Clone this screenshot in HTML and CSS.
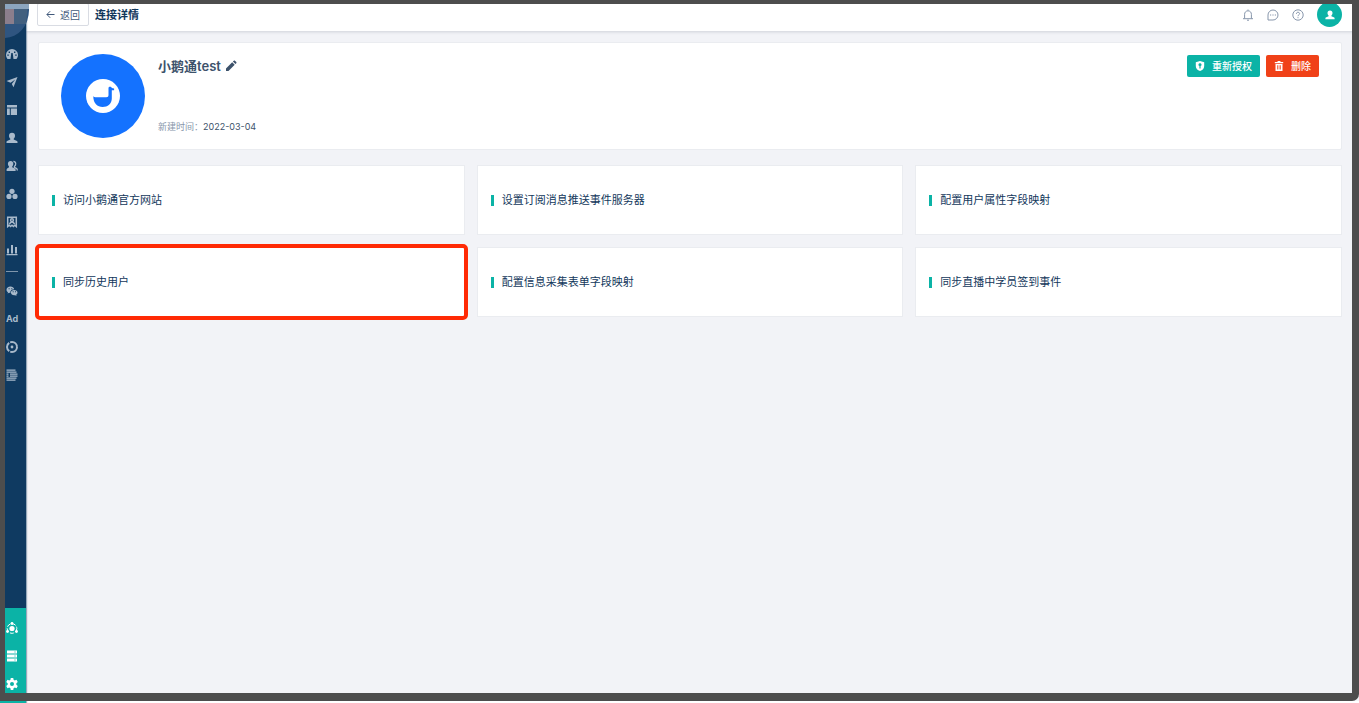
FILE: index.html
```html
<!DOCTYPE html>
<html lang="zh-CN">
<head>
  <meta charset="UTF-8">
  <meta name="viewport" content="width=device-width, initial-scale=1.0">
  <title>连接详情</title>
  <link rel="stylesheet" href="styles.css">
</head>
<body>
  <div class="layout">
    <nav class="sidebar" aria-label="主导航">
      <svg class="logo" viewBox="0 0 29 38" aria-hidden="true">
        <path d="M0 0h29v10a24 28 0 0 1-24 28H0z" fill="#2f5580"/>
        <path d="M0 0h29v9H0z" fill="#8ca5bf"/>
        <path d="M0 9h14v15H0z" fill="#8b7e8c"/>
        <path d="M14 9h13.500l-1.500 15H14z" fill="#42607f"/>
      </svg>
      <div class="menu">
        <a href="#" class="menu-item" aria-label="仪表盘">
          <svg class="icon" viewBox="0 0 12 12"><path fill="currentColor" fill-rule="evenodd" d="M1.500 11A6 6 0 1 1 10.500 11H7.500L6.700 5H5.300L4.500 11zM1.300 6.500h1.500v1.300H1.300zM2.600 3.500h1.400v1.400H2.600zM8 3.500h1.400v1.400H8zM9.200 6.500h1.500v1.300H9.200z"/></svg>
        </a>
        <a href="#" class="menu-item" aria-label="发送">
          <svg class="icon" viewBox="0 0 12 12"><path fill="currentColor" d="M.5 5 11.500 1 7.500 11.200 5.800 8 9.200 3.600 4.600 6.700z"/></svg>
        </a>
        <a href="#" class="menu-item" aria-label="页面">
          <svg class="icon" viewBox="0 0 12 12"><path fill="currentColor" d="M1 1h10v2.500H1zM1 4.500h2.800V11H1zM4.800 4.500H11V11H4.800z"/></svg>
        </a>
        <a href="#" class="menu-item" aria-label="用户">
          <svg class="icon" viewBox="0 0 12 12"><path fill="currentColor" d="M6 .7c2 0 3 1.300 3 3 0 1.400-.6 2.300-1.300 3v.9l3.300 1.300c.4.200.5.500.5 1V11H.5v-1.100c0-.5.1-.8.5-1l3.300-1.300v-.9C3.600 6 3 5.100 3 3.700c0-1.700 1-3 3-3z"/></svg>
        </a>
        <a href="#" class="menu-item" aria-label="群组">
          <svg class="icon" viewBox="0 0 12 12"><path fill="currentColor" d="M4.600 1c1.700 0 2.700 1.200 2.700 2.800 0 1.300-.5 2-1.100 2.700v.8L9 8.500c.4.200.6.500.6 1V11H.6V9.500c0-.5.2-.8.6-1L3 7.300v-.8c-.6-.7-1.100-1.400-1.100-2.700C1.900 2.200 2.900 1 4.600 1z"/><path fill="none" stroke="currentColor" stroke-width="1.300" d="M7.400 1.500c3 0 2.800 3.500 1 5v.8l2.300 1.300c.4.300.6.800.6 1.800"/></svg>
        </a>
        <a href="#" class="menu-item" aria-label="分群">
          <svg class="icon" viewBox="0 0 12 12" fill="currentColor"><circle cx="6" cy="3.300" r="2.600"/><circle cx="3" cy="8.400" r="2.600"/><circle cx="9" cy="8.400" r="2.600"/></svg>
        </a>
        <a href="#" class="menu-item" aria-label="会员">
          <svg class="icon" viewBox="0 0 12 12" fill="none" stroke="currentColor" stroke-width="1.500"><path d="M1.700 1.200h8.600v9.400L8.800 9.300 7.400 10.600 6 9.300l-1.400 1.300-1.400-1.300-1.500 1.300z"/><circle cx="6" cy="4.200" r="1.400"/><path d="M3.500 8.200C4 6.300 5 5.900 6 5.900s2 .4 2.500 2.300"/></svg>
        </a>
        <a href="#" class="menu-item" aria-label="统计">
          <svg class="icon" viewBox="0 0 12 12"><path fill="currentColor" d="M1 4.500h2v5H1zM5 1h2v8.500H5zM9 3h2v6.500H9zM.5 10h11v1.300H.5z"/></svg>
        </a>
        <hr class="menu-divider">
        <a href="#" class="menu-item" aria-label="微信">
          <svg class="icon" viewBox="0 0 12 12"><path fill="currentColor" d="M4.500 1.500C2.200 1.500.5 2.900.5 4.700c0 1.100.6 2 1.500 2.600l-.4 1.300 1.500-.8 1.200.1C4 5.700 5.700 4.200 8.200 4.200 7.800 2.600 6.300 1.500 4.500 1.500z"/><path fill="currentColor" d="M8.200 4.900c-1.900 0-3.300 1.100-3.300 2.700 0 1.500 1.400 2.700 3.300 2.700l1-.1 1.300.7-.3-1.100c.8-.5 1.300-1.300 1.300-2.200 0-1.600-1.500-2.700-3.300-2.700z"/><path fill="#0f3a61" d="M2.600 3.300h1v1h-1zM5.300 3.300h1v1h-1zM6.700 6.300h.9v.9h-.9zM9 6.300h.9v.9H9z"/></svg>
        </a>
        <a href="#" class="menu-item menu-text">Ad</a>
        <a href="#" class="menu-item" aria-label="目标">
          <svg class="icon" viewBox="0 0 12 12"><circle cx="6" cy="6" r="5" fill="none" stroke="currentColor" stroke-width="2" stroke-dasharray="9.500 1"/><circle cx="6" cy="6" r="1.400" fill="currentColor"/></svg>
        </a>
        <a href="#" class="menu-item" aria-label="日志">
          <svg class="icon" viewBox="0 0 12 12"><path fill="none" stroke="currentColor" stroke-width="1.200" d="M.5 1.200h9M.5 3.200h10M.5 5.200h2M4 5.200h7.500M.5 7.200h2M4 7.200h7.500M.5 9.200h10M.5 11.200h9"/></svg>
        </a>
      </div>
      <div class="menu-bottom">
        <a href="#" class="menu-item" aria-label="连接">
          <svg class="icon" viewBox="0 0 12 12"><circle cx="6" cy="6.500" r="4.800" fill="none" stroke="currentColor" stroke-dasharray="4 1.500"/><g fill="currentColor"><circle cx="6" cy="6.500" r="2.600"/><circle cx="6" cy="1.500" r="1.400"/><circle cx="1.500" cy="9.500" r="1.400"/><circle cx="10.500" cy="9.500" r="1.400"/></g></svg>
        </a>
        <a href="#" class="menu-item" aria-label="数据">
          <svg class="icon" viewBox="0 0 12 12"><path fill="currentColor" fill-rule="evenodd" d="M1 .5h10v3H1zM1 4.500h10v3H1zM1 8.500h10v3H1zM8.500 1.500v1h1v-1zM8.500 5.500v1h1v-1zM8.500 9.500v1h1v-1z"/></svg>
        </a>
        <a href="#" class="menu-item" aria-label="设置">
          <svg class="icon" viewBox="0 0 24 24"><path fill="currentColor" d="M9.500 0h5l.6 3.600 2.500 1.400L21 3.700l2.500 4.400-2.800 2.300v3.200l2.800 2.300-2.500 4.400-3.400-1.300-2.500 1.400-.6 3.600h-5l-.6-3.600L6.400 19 3 20.300.5 15.900l2.800-2.300v-3.200L.5 8.100 3 3.700 6.400 5l2.500-1.400zM12 8a4 4 0 1 0 0 8 4 4 0 0 0 0-8z"/></svg>
        </a>
      </div>
    </nav>

    <div class="page">
      <header class="header">
        <button type="button" class="back-button">
          <svg class="back-arrow" viewBox="0 0 9 9" fill="none" stroke="currentColor"><path d="M8.500 4.500H1M4.200 1.200.9 4.500l3.300 3.300"/></svg>
          返回
        </button>
        <h1 class="header-title">连接详情</h1>
        <div class="header-tools">
          <button type="button" class="tool-button" aria-label="通知">
            <svg class="icon" viewBox="0 0 12 12" fill="none" stroke="currentColor"><path d="M2.600 9.500V5.300c0-2 1.400-3.500 3.400-3.500s3.400 1.500 3.400 3.500v4.200M1 9.700h10M5 11.200h2M6 .5v1"/></svg>
          </button>
          <button type="button" class="tool-button" aria-label="消息">
            <svg class="icon" viewBox="0 0 12 12" fill="none" stroke="currentColor"><path d="M1 11V6a5 5 0 1 1 5 5z"/><path d="M3 6h1.200M5.400 6h1.200M7.800 6H9"/></svg>
          </button>
          <button type="button" class="tool-button" aria-label="帮助">
            <svg class="icon" viewBox="0 0 12 12" fill="none" stroke="currentColor"><circle cx="6" cy="6" r="5.200"/><path d="M4.400 4.800c0-2.200 3.200-2 3.200-.1C7.600 5.800 6 5.800 6 7.200M6 8.200v1"/></svg>
          </button>
          <button type="button" class="user-button" aria-label="账户">
            <svg class="user-icon" viewBox="0 0 12 12"><path fill="currentColor" d="M6 .7c2 0 3 1.300 3 3 0 1.400-.6 2.300-1.300 3v.9l3.300 1.300c.4.200.5.500.5 1V11H.5v-1.100c0-.5.1-.8.5-1l3.300-1.300v-.9C3.600 6 3 5.100 3 3.700c0-1.700 1-3 3-3z"/></svg>
          </button>
        </div>
      </header>

      <main class="content">
        <section class="detail">
          <svg class="detail-logo" viewBox="0 0 84 84" aria-hidden="true">
            <circle cx="42" cy="42" r="42" fill="#1472ff"/>
            <circle cx="42" cy="42" r="17" fill="#fff"/>
            <path d="M32.300 42c.5 1.200 1.500 1.300 3 1.300h10c1.500 0 2.200-.7 2.200-2.200V34c0-1.800 3-1.800 3.300 0l2.300.6v1.600h-2.300v8.300c0 5-4 8.500-9.200 8.500s-9.300-4-9.300-10.500z" fill="#1472ff"/>
          </svg>
          <div class="detail-info">
            <div class="detail-name">
              <h2>小鹅通test</h2>
              <button type="button" class="edit-button" aria-label="编辑">
                <svg class="icon" viewBox="0 0 12 12"><path fill="currentColor" d="M1 11V8.500L7.200 2.300l2.500 2.500L3.500 11zM7.900 1.600l.9-.9c.3-.3.8-.3 1.100 0l1.400 1.400c.3.300.3.800 0 1.100l-.9.900z"/></svg>
              </button>
            </div>
            <p class="detail-time"><span class="detail-label">新建时间：</span><time datetime="2022-03-04">2022-03-04</time></p>
          </div>
          <div class="detail-actions">
            <button type="button" class="button button-primary">
              <svg class="button-icon" viewBox="0 0 10 10"><path fill="currentColor" d="M5 0 9.200 1.300V5c0 2.500-1.700 4.200-4.200 5C2.500 9.200.8 7.500.8 5V1.300z"/><path fill="#0bb3a6" d="M5 2.200a1.500 1.500 0 0 1 .6 2.900v2.300H4.400V5.100A1.500 1.500 0 0 1 5 2.200z"/></svg>
              重新授权
            </button>
            <button type="button" class="button button-danger">
              <svg class="button-icon" viewBox="0 0 10 10"><path fill="currentColor" fill-rule="evenodd" d="M.8 1h2.500l.5-.9h2.400l.5.900h2.500v1.200H.8zM1.500 2.900h7V10h-7zM3.200 4.200v4.400h.7V4.200zM4.700 4.200v4.400h.7V4.200zM6.200 4.200v4.400h.7V4.200z"/></svg>
              删除
            </button>
          </div>
        </section>

        <section class="cards">
          <a href="#" class="card"><span class="card-title">访问小鹅通官方网站</span></a>
          <a href="#" class="card"><span class="card-title">设置订阅消息推送事件服务器</span></a>
          <a href="#" class="card"><span class="card-title">配置用户属性字段映射</span></a>
          <a href="#" class="card card-marked"><span class="card-title">同步历史用户</span></a>
          <a href="#" class="card"><span class="card-title">配置信息采集表单字段映射</span></a>
          <a href="#" class="card"><span class="card-title">同步直播中学员签到事件</span></a>
        </section>
      </main>
    </div>
  </div>
  <div class="frame"></div>
</body>
</html>
```
FILE: styles.css
```css
* {
  box-sizing: border-box;
}

body {
  margin: 0;
  background: #fff;
  color: #12375b;
  font-family: Inter, "Noto Sans CJK SC", sans-serif;
  font-size: 11px;
  line-height: 16px;
}

h1, h2, p {
  margin: 0;
}

a {
  color: inherit;
  text-decoration: none;
}

button {
  padding: 0;
  border: 0;
  background: none;
  color: inherit;
  font: inherit;
  cursor: pointer;
}

svg {
  display: block;
}

.icon {
  width: 12px;
  height: 12px;
}

.layout {
  display: flex;
  min-height: 100vh;
}

/* dark border drawn around the whole window */
.frame {
  position: fixed;
  inset: 0 0 2px;
  z-index: 10;
  border: solid #4d4d4d;
  border-width: 4px 7px 8px 5px;
  border-bottom-right-radius: 7px;
  pointer-events: none;
}

/* sidebar */
.sidebar {
  position: relative;
  z-index: 2;
  flex: none;
  display: flex;
  flex-direction: column;
  justify-content: space-between;
  width: 26px;
  padding-top: 40px;
  background: #0f3a61;
  color: #a9bacb;
  box-shadow: 1px 0 1px rgba(15, 58, 97, 0.4);
}

.logo {
  position: absolute;
  left: 0;
  top: 0;
  width: 29px;
  height: 38px;
}

.menu-item {
  display: flex;
  align-items: center;
  justify-content: center;
  height: 28px;
  padding-right: 2px;
}

.menu-text {
  font-size: 9px;
  font-weight: 700;
}

.menu-divider {
  width: 12px;
  height: 1px;
  margin: 7px 8px 5px 6px;
  border: 0;
  background: #7f96ac;
}

.menu-bottom {
  padding: 6px 0 5px;
  background: #0bb3a6;
  color: #fff;
}

/* header */
.page {
  flex: 1;
  display: flex;
  flex-direction: column;
  min-width: 0;
  margin-bottom: 2px;
  background: #f2f3f7;
}

.header {
  position: relative;
  display: flex;
  align-items: center;
  height: 31px;
  padding: 0 17px 2px 11px;
  background: #fff;
  box-shadow: 0 1px 3px rgba(0, 20, 50, 0.15);
}

.back-button {
  display: flex;
  align-items: center;
  gap: 5px;
  height: 23px;
  padding: 0 8px;
  border: 1px solid #d9dce3;
  border-radius: 2px;
  color: #41597a;
  font-size: 10px;
}

.back-arrow {
  width: 9px;
  height: 9px;
}

.header-title {
  margin-left: 6px;
  font-size: 11px;
  font-weight: 700;
}

.header-tools {
  display: flex;
  align-items: center;
  gap: 13px;
  margin-left: auto;
  color: #8796ab;
}

.user-button {
  display: flex;
  align-items: center;
  justify-content: center;
  width: 25px;
  height: 25px;
  border-radius: 50%;
  background: #0bb3a6;
  color: #fff;
}

.user-icon {
  width: 10px;
  height: 10px;
}

/* connection info */
.content {
  padding: 11px 17px 11px 12px;
}

.detail {
  display: flex;
  gap: 13px;
  margin-bottom: 15px;
  padding: 11px 22px;
  border: 1px solid #eaecf0;
  border-radius: 2px;
  background: #fff;
}

.detail-logo {
  width: 84px;
  height: 84px;
}

.detail-info {
  display: flex;
  flex-direction: column;
  justify-content: space-between;
  padding: 4px 0 3px;
}

.detail-name {
  display: flex;
  align-items: center;
  gap: 4px;
  color: #3d526b;
}

.detail-name h2 {
  font-size: 13px;
  font-weight: 600;
}

.detail-time {
  font-size: 9px;
  color: #3d526b;
}

.detail-label {
  color: #8796ab;
}

.detail-actions {
  display: flex;
  align-items: flex-start;
  gap: 6px;
  margin-left: auto;
  padding-top: 1px;
}

.button {
  display: flex;
  align-items: center;
  gap: 7px;
  height: 22px;
  padding: 0 8px;
  border-radius: 2px;
  color: #fff;
  font-size: 10px;
  font-weight: 500;
}

.button-icon {
  width: 10px;
  height: 10px;
}

.button-primary {
  background: #0bb3a6;
}

.button-danger {
  background: #f04118;
}

/* action cards */
.cards {
  display: grid;
  grid-template-columns: repeat(3, 1fr);
  gap: 12px;
}

.card {
  position: relative;
  display: flex;
  align-items: center;
  height: 70px;
  padding: 0 13px;
  border: 1px solid #eaecf0;
  background: #fff;
}

.card-title {
  display: flex;
  align-items: center;
  gap: 8px;
}

.card-title::before {
  content: "";
  width: 3px;
  height: 11px;
  background: #0bb3a6;
}

.card-marked::after {
  content: "";
  position: absolute;
  inset: -4px;
  border: 4px solid #ff2a05;
  border-radius: 5px;
}
```
